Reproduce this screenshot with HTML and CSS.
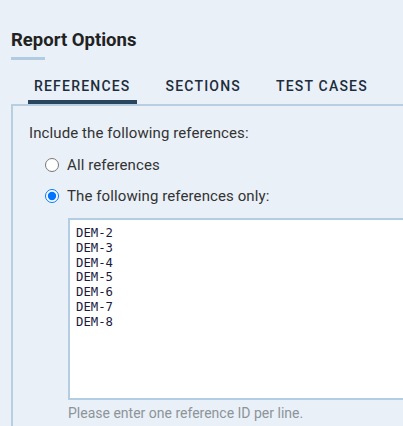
FILE: index.html
```html
<!DOCTYPE html>
<html lang="en">
  <head>
    <meta charset="UTF-8" />
    <meta name="viewport" content="width=device-width, initial-scale=1.0" />
    <title>Report Options</title>
    <link rel="stylesheet" href="styles.css">
  </head>
  <body>
    <div class="dialog">
      <h2 class="title">Report Options</h2>
      <div class="tabs">
        <span class="tab active">REFERENCES</span>
        <span class="tab">SECTIONS</span>
        <span class="tab">TEST CASES</span>
      </div>
      <div class="panel">
        <p class="lead">Include the following references:</p>
        <label class="option">
          <input type="radio" name="refs" />
          <span>All references</span>
        </label>
        <label class="option">
          <input type="radio" name="refs" checked />
          <span>The following references only:</span>
        </label>
        <div class="refs">
          <textarea class="ref-list">DEM-2
DEM-3
DEM-4
DEM-5
DEM-6
DEM-7
DEM-8</textarea>
          <div class="hint">Please enter one reference ID per line.</div>
        </div>
      </div>
    </div>
  </body>
</html>
```

FILE: styles.css
```css
body {
  margin: 0;
  background: #e9f0f7;
  font-family: Roboto, "Liberation Sans", sans-serif;
  color: #333;
  overflow: hidden;
}
.dialog {
  padding: 29px 0 0 11px;
}
.title {
  margin: 0;
  font-size: 18.5px;
  font-weight: 700;
  color: #222;
  line-height: 22px;
}
.title::after {
  content: "";
  display: block;
  width: 34px;
  height: 3px;
  margin-top: 6px;
  background: #b1cbe0;
}
.tabs {
  display: flex;
  gap: 23px;
  padding: 18px 0 0 17px;
}
.tab {
  padding: 0 6px 5px;
  font-size: 14px;
  font-weight: 500;
  letter-spacing: 1.2px;
  color: #1d2d3c;
  border-bottom: 4px solid transparent;
  line-height: 17px;
}
.tab.active {
  border-bottom-color: #28465e;
}
.panel {
  border-top: 2px solid #b8cfe2;
  border-left: 2px solid #b8cfe2;
  padding: 15px 0 30px 16px;
}
.lead {
  margin: 0 0 4px;
  font-size: 15px;
  line-height: 24px;
  letter-spacing: 0.1px;
}
.option {
  display: flex;
  align-items: center;
  gap: 8px;
  height: 31px;
  padding-left: 16px;
  font-size: 15px;
  letter-spacing: 0.1px;
}
.option input {
  margin: 0;
  width: 14px;
  height: 14px;
}
.refs {
  padding: 7px 0 0 39px;
}
.ref-list {
  display: block;
  box-sizing: border-box;
  width: 400px;
  height: 182px;
  margin: 0;
  padding: 6px 6px;
  border: 2px solid #b3cde3;
  border-right: none;
  border-radius: 0;
  background: #fff;
  font-family: "DejaVu Sans Mono", monospace;
  font-size: 12.3px;
  line-height: 14.8px;
  color: #1a1a40;
  resize: none;
}
.hint {
  margin-top: 5px;
  font-size: 14px;
  color: #8d9499;
}
```
